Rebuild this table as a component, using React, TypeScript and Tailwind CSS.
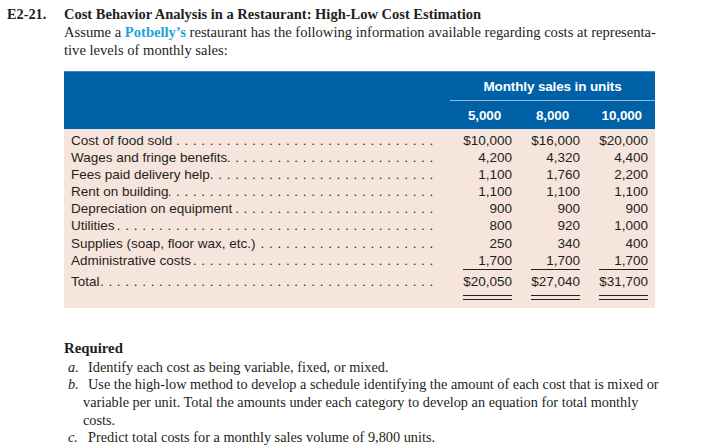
import React from "react";

const rows = [
  ["Cost of food sold", "$10,000", "$16,000", "$20,000"],
  ["Wages and fringe benefits", "4,200", "4,320", "4,400"],
  ["Fees paid delivery help.", "1,100", "1,760", "2,200"],
  ["Rent on building", "1,100", "1,100", "1,100"],
  ["Depreciation on equipment", "900", "900", "900"],
  ["Utilities", "800", "920", "1,000"],
  ["Supplies (soap, floor wax, etc.)", "250", "340", "400"],
  ["Administrative costs", "1,700", "1,700", "1,700"],
];

const totals = ["$20,050", "$27,040", "$31,700"];

const Label = ({ text }: { text: string }) => (
  <div className="flex min-w-0 pr-[4px]">
    <span className="whitespace-nowrap">{text}</span>
    <span className="flex-1 overflow-hidden whitespace-nowrap text-right [direction:rtl] tracking-[4.7px] pl-[5px]">
      {".".repeat(70)}
    </span>
  </div>
);

export default function App() {
  return (
    <div className="w-[723px] h-[448px] overflow-hidden bg-white text-[#231f20] pl-[7px] pt-[5px] font-['Liberation_Serif',serif]">
      <div className="flex">
        <div className="w-[57px] shrink-0 font-bold text-[14.3px] leading-[18px]">E2-21.</div>
        <div className="flex-1">
          <h1 className="font-bold text-[14.5px] leading-[18px]">
            Cost Behavior Analysis in a Restaurant: High-Low Cost Estimation
          </h1>
          <p className="text-[14.6px] leading-[18px] whitespace-nowrap">
            Assume a <span className="font-bold text-[#1ba3dd]">Potbelly’s</span> restaurant has the following
            information available regarding costs at representa-
            <br />
            tive levels of monthly sales:
          </p>

          <div className="mt-[12px] w-[591px] font-['Liberation_Sans',Arial,sans-serif] text-[13.5px]">
            <div className="bg-[#0061a7] border-t border-[#3d86c4] text-white font-bold pt-[6px] pb-[5px]">
              <div className="ml-auto w-[205px]">
                <div className="text-center leading-[17px] tracking-[-0.01em]">Monthly sales in units</div>
                <div className="mt-[5px] border-t border-[#8fb9e0]" />
              </div>
              <div className="grid grid-cols-[1fr_70px_68px_68px] pr-[7px] mt-[6px] leading-[17px] tracking-[-0.01em]">
                <div />
                <div className="text-right pr-[11px]">5,000</div>
                <div className="text-right pr-[11px]">8,000</div>
                <div className="text-right pr-[6px]">10,000</div>
              </div>
            </div>

            <div className="bg-[#f6e5dc] pl-[7px] pr-[7px] pt-[3px] pb-[8px] leading-[17.1px]">
              {rows.map((r, i) => (
                <div key={i} className="grid grid-cols-[1fr_70px_68px_68px]">
                  <Label text={r[0]} />
                  {r.slice(1).map((v, j) => (
                    <div key={j} className="flex justify-end">
                      <span
                        className={
                          i === rows.length - 1
                            ? "block w-[49px] text-right border-b border-[#231f20]"
                            : "block text-right"
                        }
                      >
                        {v}
                      </span>
                    </div>
                  ))}
                </div>
              ))}
              <div className="grid grid-cols-[1fr_70px_68px_68px] items-start mt-[3px]">
                <Label text="Total" />
                {totals.map((v, j) => (
                  <div key={j} className="flex justify-end">
                    <span className="block w-[49px] border-b border-[#231f20] pb-[3px]">
                      <span className="block text-right border-b border-[#231f20] pb-[5px]">{v}</span>
                    </span>
                  </div>
                ))}
              </div>
            </div>
          </div>

          <div className="mt-[31px] text-[14.3px]">
            <h2 className="font-bold text-[14.8px] leading-[18px]">Required</h2>
            <div className="mt-[2px] leading-[17.6px] whitespace-nowrap">
              <div className="pl-[19px] -indent-[15px]">
                <span className="inline-block w-[20px] indent-0 italic">a.</span>
                Identify each cost as being variable, fixed, or mixed.
              </div>
              <div className="pl-[19px] -indent-[15px]">
                <span className="inline-block w-[20px] indent-0 italic">b.</span>
                Use the high-low method to develop a schedule identifying the amount of each cost that is mixed or
                <br />
                variable per unit. Total the amounts under each category to develop an equation for total monthly
                <br />
                costs.
              </div>
              <div className="pl-[19px] -indent-[15px]">
                <span className="inline-block w-[20px] indent-0 italic">c.</span>
                Predict total costs for a monthly sales volume of 9,800 units.
              </div>
            </div>
          </div>
        </div>
      </div>
    </div>
  );
}
